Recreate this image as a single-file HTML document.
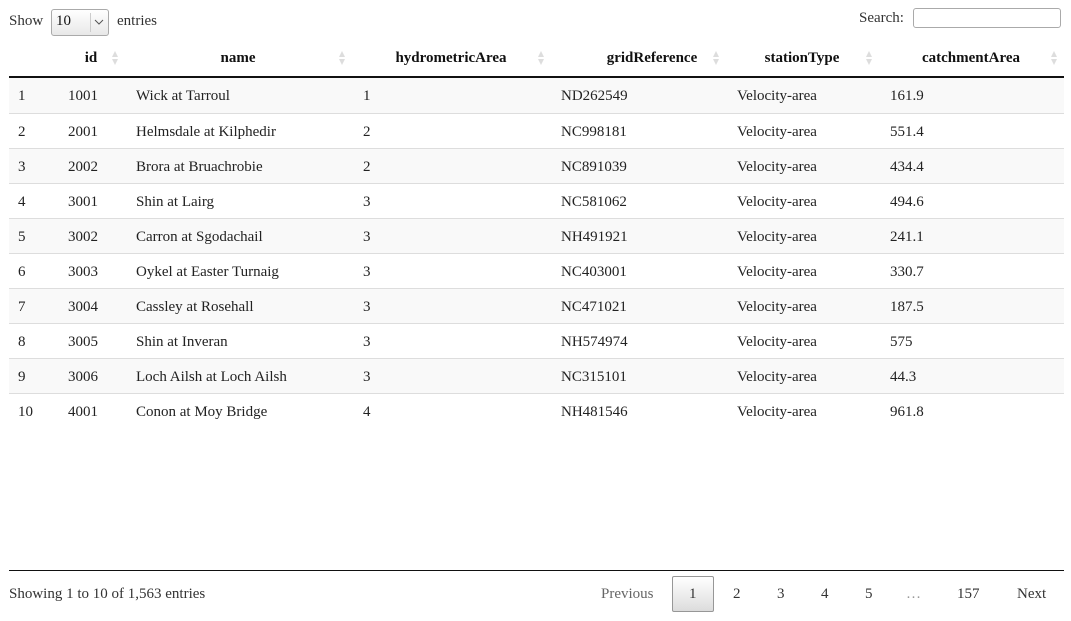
<!DOCTYPE html>
<html><head><style>
*{margin:0;padding:0;box-sizing:border-box}
body{width:1071px;height:621px;background:#fff;font-family:"Liberation Serif",serif;font-size:15px;color:#333;position:relative;overflow:hidden}
.a{position:absolute;white-space:nowrap}
.row{position:absolute;left:9px;width:1055px;height:35px;border-top:1px solid #ddd}
.row.odd{background:#f9f9f9}
.row span{position:absolute;top:10px;color:#222}
.h{position:absolute;top:50px;font-weight:bold;color:#111;width:200px;text-align:center}
.s{position:absolute;top:51px;width:7px;height:14px}
.s:before{content:"";position:absolute;left:0;top:0;border-left:3.5px solid transparent;border-right:3.5px solid transparent;border-bottom:6px solid #ddd}
.s:after{content:"";position:absolute;left:0;top:8px;border-left:3.5px solid transparent;border-right:3.5px solid transparent;border-top:6px solid #ddd}
.pg{position:absolute;top:586px;color:#333}
</style></head><body>
<div class="a" style="left:9px;top:13px">Show</div>
<div class="a" style="left:51px;top:9px;width:58px;height:27px;border:1px solid #aaa;border-radius:3px;background:linear-gradient(#fff,#e8e8e8)">
<span class="a" style="left:4px;top:3px;color:#111">10</span>
<span class="a" style="left:38px;top:3px;width:1px;height:19px;background:#ccc"></span>
<svg class="a" style="left:42px;top:9px" width="10" height="7"><path d="M1 1 L5 5 L9 1" fill="none" stroke="#555" stroke-width="1"/></svg>
</div>
<div class="a" style="left:117px;top:13px">entries</div>
<div class="a" style="left:859px;top:10px">Search:</div>
<div class="a" style="left:913px;top:8px;width:148px;height:20px;border:1px solid #aaa;border-radius:3px;background:#fff"></div>

<div class="h" style="left:-9px">id</div><div class="s" style="left:112px"></div>
<div class="h" style="left:138px">name</div><div class="s" style="left:339px"></div>
<div class="h" style="left:351px">hydrometricArea</div><div class="s" style="left:538px"></div>
<div class="h" style="left:552px">gridReference</div><div class="s" style="left:713px"></div>
<div class="h" style="left:702px">stationType</div><div class="s" style="left:866px"></div>
<div class="h" style="left:871px">catchmentArea</div><div class="s" style="left:1051px"></div>
<div class="a" style="left:9px;top:76px;width:1055px;height:2px;background:#111"></div>

<div class="row odd" style="top:78px;border-top:none"><span style="left:9px">1</span><span style="left:59px">1001</span><span style="left:127px">Wick at Tarroul</span><span style="left:354px">1</span><span style="left:552px">ND262549</span><span style="left:728px">Velocity-area</span><span style="left:881px">161.9</span></div>
<div class="row" style="top:113px"><span style="left:9px">2</span><span style="left:59px">2001</span><span style="left:127px">Helmsdale at Kilphedir</span><span style="left:354px">2</span><span style="left:552px">NC998181</span><span style="left:728px">Velocity-area</span><span style="left:881px">551.4</span></div>
<div class="row odd" style="top:148px"><span style="left:9px">3</span><span style="left:59px">2002</span><span style="left:127px">Brora at Bruachrobie</span><span style="left:354px">2</span><span style="left:552px">NC891039</span><span style="left:728px">Velocity-area</span><span style="left:881px">434.4</span></div>
<div class="row" style="top:183px"><span style="left:9px">4</span><span style="left:59px">3001</span><span style="left:127px">Shin at Lairg</span><span style="left:354px">3</span><span style="left:552px">NC581062</span><span style="left:728px">Velocity-area</span><span style="left:881px">494.6</span></div>
<div class="row odd" style="top:218px"><span style="left:9px">5</span><span style="left:59px">3002</span><span style="left:127px">Carron at Sgodachail</span><span style="left:354px">3</span><span style="left:552px">NH491921</span><span style="left:728px">Velocity-area</span><span style="left:881px">241.1</span></div>
<div class="row" style="top:253px"><span style="left:9px">6</span><span style="left:59px">3003</span><span style="left:127px">Oykel at Easter Turnaig</span><span style="left:354px">3</span><span style="left:552px">NC403001</span><span style="left:728px">Velocity-area</span><span style="left:881px">330.7</span></div>
<div class="row odd" style="top:288px"><span style="left:9px">7</span><span style="left:59px">3004</span><span style="left:127px">Cassley at Rosehall</span><span style="left:354px">3</span><span style="left:552px">NC471021</span><span style="left:728px">Velocity-area</span><span style="left:881px">187.5</span></div>
<div class="row" style="top:323px"><span style="left:9px">8</span><span style="left:59px">3005</span><span style="left:127px">Shin at Inveran</span><span style="left:354px">3</span><span style="left:552px">NH574974</span><span style="left:728px">Velocity-area</span><span style="left:881px">575</span></div>
<div class="row odd" style="top:358px"><span style="left:9px">9</span><span style="left:59px">3006</span><span style="left:127px">Loch Ailsh at Loch Ailsh</span><span style="left:354px">3</span><span style="left:552px">NC315101</span><span style="left:728px">Velocity-area</span><span style="left:881px">44.3</span></div>
<div class="row" style="top:393px"><span style="left:9px">10</span><span style="left:59px">4001</span><span style="left:127px">Conon at Moy Bridge</span><span style="left:354px">4</span><span style="left:552px">NH481546</span><span style="left:728px">Velocity-area</span><span style="left:881px">961.8</span></div>

<div class="a" style="left:9px;top:570px;width:1055px;height:1px;background:#111"></div>
<div class="a" style="left:9px;top:586px">Showing 1 to 10 of 1,563 entries</div>
<div class="pg" style="left:601px;color:#666">Previous</div>
<div class="a" style="left:672px;top:576px;width:42px;height:36px;border:1px solid #979797;border-radius:2px;background:linear-gradient(#fff,#dcdcdc)"></div>
<div class="pg" style="left:689px">1</div>
<div class="pg" style="left:733px">2</div>
<div class="pg" style="left:777px">3</div>
<div class="pg" style="left:821px">4</div>
<div class="pg" style="left:865px">5</div>
<div class="pg" style="left:906px;color:#999">…</div>
<div class="pg" style="left:957px">157</div>
<div class="pg" style="left:1017px">Next</div>
</body></html>
